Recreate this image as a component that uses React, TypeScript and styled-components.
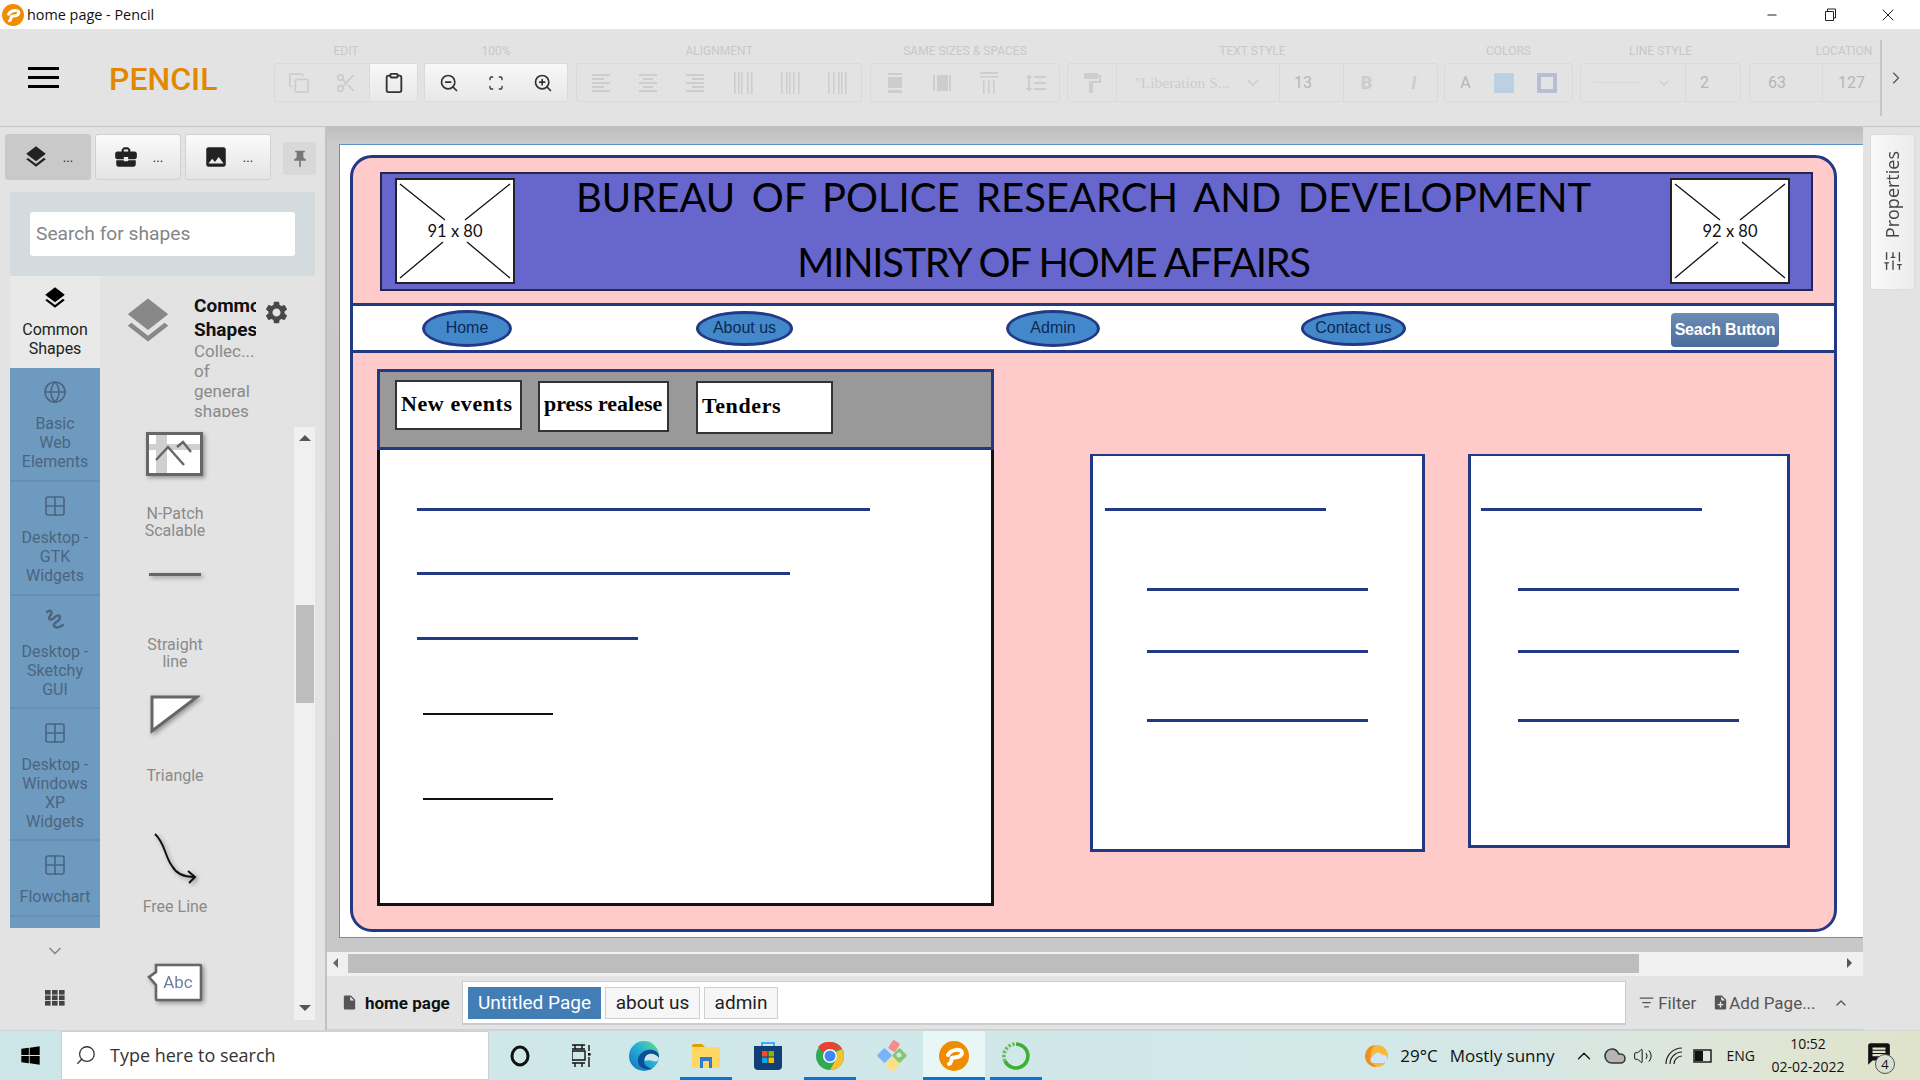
import React from 'react'
import styled, { createGlobalStyle } from 'styled-components'
import {
  Copy, Scissors, Clipboard, ZoomIn, ZoomOut, Scan, ChevronDown, ChevronUp, ChevronRight,
  Globe, Grid2x2, SlidersVertical, Search, Minus, X, Volume2, ListFilter, Cloud,
} from 'lucide-react'
import {
  MdLayers, MdBusinessCenter, MdPhoto, MdPushPin, MdSettings, MdFormatAlignLeft, MdFormatAlignCenter,
  MdFormatAlignRight, MdFormatPaint, MdFormatLineSpacing, MdInsertDriveFile, MdNoteAdd, MdMessage,
} from 'react-icons/md'
import { FaWindows } from 'react-icons/fa'

const GlobalStyle = createGlobalStyle`
  html, body { margin: 0; padding: 0; overflow: hidden; background: #e3e3e3; }
  * { box-sizing: border-box; }
  #root { width: 1920px; height: 1080px; font-family: Roboto, "Liberation Sans", sans-serif; }
`

const Screen = styled.div`
  width: 1920px;
  height: 1080px;
  display: flex;
  flex-direction: column;
  overflow: hidden;
`

/* window title */
const TitleBar = styled.div`
  height: 29px;
  flex: none;
  background: #fff;
  display: flex;
  align-items: center;
  padding-left: 2px;
  font-family: "Open Sans", sans-serif;
  font-size: 14.4px;
  color: #111;
`
const TitleText = styled.span`
  margin-left: 3px;
`
const WindowButtons = styled.div`
  margin-left: auto;
  margin-right: 3px;
  display: flex;
  color: #222;
`
const WindowButton = styled.div`
  width: 58px;
  height: 29px;
  display: flex;
  align-items: center;
  justify-content: center;
`

/* toolbar */
const Toolbar = styled.div`
  height: 98px;
  flex: none;
  background: #e3e3e3;
  border-bottom: 1px solid #c4c4c4;
  display: flex;
  position: relative;
`
const Burger = styled.svg`
  margin: 38px 0 0 28px;
  flex: none;
`
const Brand = styled.div`
  width: 165px;
  padding: 32px 0 0 50px;
  flex: none;
  font-size: 32px;
  font-weight: 500;
  line-height: 37px;
  color: #e08900;
`
const ToolGroups = styled.div`
  width: 1654px;
  flex: none;
  overflow: hidden;
  display: flex;
`
const ToolGroup = styled.div<{ $w: number; $ml: number }>`
  width: ${p => p.$w}px;
  margin-left: ${p => p.$ml}px;
  flex: none;
`
const ToolLabel = styled.div`
  height: 34px;
  padding-top: 15px;
  text-align: center;
  font-size: 12px;
  line-height: 14px;
  color: #c8c8c8;
  white-space: nowrap;
`
const ToolRow = styled.div`
  height: 39px;
  display: flex;
  border: 1px solid #dadada;
  border-radius: 3px;
  overflow: hidden;
`
const ToolButton = styled.div<{ $w?: number; $on?: boolean; $sep?: boolean; $serif?: boolean }>`
  width: ${p => (p.$w ? `${p.$w}px` : 'auto')};
  flex: ${p => (p.$w ? 'none' : '1')};
  display: flex;
  align-items: center;
  justify-content: center;
  gap: 14px;
  color: ${p => (p.$on ? '#333' : '#cdcdcd')};
  background: ${p => (p.$on ? 'linear-gradient(#f8f8f8, #e8e8e8)' : 'transparent')};
  border-left: ${p => (p.$sep ? '1px solid #dadada' : 'none')};
  font-family: ${p => (p.$serif ? '"Liberation Serif", serif' : 'Roboto, sans-serif')};
  font-size: ${p => (p.$serif ? '15.5px' : '16px')};
  white-space: nowrap;
`
const NumberText = styled.span<{ $pr?: number }>`
  padding-right: ${p => p.$pr || 0}px;
  color: #b6b6b6;
`
const StyleLetters = styled.span`
  display: flex;
  gap: 39px;
  margin-right: 4px;
  font-size: 18px;
  font-weight: 700;
`
const ColorSet = styled.div`
  display: flex;
  align-items: center;
  gap: 23px;
`
const FillSwatch = styled.span`
  width: 20px;
  height: 20px;
  background: #bcd0e1;
`
const StrokeSwatch = styled.span`
  width: 20px;
  height: 20px;
  border: 4px solid #b9bdd3;
`
const LineSample = styled.span`
  width: 48px;
  height: 1px;
  background: #d8d8d8;
`
const ToolMore = styled.div`
  position: absolute;
  right: 0;
  top: 11px;
  width: 40px;
  height: 76px;
  border-left: 2px solid #c6c6c6;
  display: flex;
  align-items: center;
  justify-content: center;
  padding-right: 10px;
  color: #555;
`

/* middle */
const Main = styled.div`
  flex: 1;
  display: flex;
  min-height: 0;
`

/* left panel */
const LeftPanel = styled.div`
  width: 327px;
  flex: none;
  background: #e3e3e3;
  border-right: 2px solid #c2c2c2;
  display: flex;
  flex-direction: column;
`
const PanelTabs = styled.div`
  display: flex;
  height: 65px;
  padding: 7px 0 0 5px;
  flex: none;
`
const PanelTab = styled.div<{ $on?: boolean }>`
  width: 86px;
  height: 46px;
  margin-right: 4px;
  border: 1px solid ${p => (p.$on ? '#c8c8c8' : '#d0d0d0')};
  border-radius: 3px;
  background: ${p => (p.$on ? '#c9c9c9' : 'linear-gradient(#fafafa, #e4e4e4)')};
  display: flex;
  align-items: center;
  justify-content: center;
  gap: 14px;
  color: #222;
  font-size: 13px;
`
const PinButton = styled.div`
  width: 33px;
  height: 33px;
  margin: 8px 0 0 8px;
  border-radius: 3px;
  background: #d8d8d8;
  display: flex;
  align-items: center;
  justify-content: center;
  color: #777;
`
const SearchArea = styled.div`
  width: 305px;
  height: 84px;
  margin-left: 10px;
  padding: 20px;
  flex: none;
  background: #d3dbdf;
`
const SearchInput = styled.input`
  width: 265px;
  height: 44px;
  border: 0;
  outline: 0;
  border-radius: 3px;
  background: #fff;
  padding: 0 6px 2px;
  font-family: Roboto, sans-serif;
  font-size: 19.2px;
  &::placeholder { color: #858585; opacity: 1; }
`
const PanelBody = styled.div`
  flex: 1;
  display: flex;
  padding-left: 10px;
  min-height: 0;
`
const Categories = styled.div`
  width: 90px;
  flex: none;
  display: flex;
  flex-direction: column;
`
const CategoryList = styled.div`
  height: 560px;
  flex: none;
  background: #6f9abf;
  overflow: hidden;
`
const Category = styled.div<{ $on?: boolean; $tight?: boolean }>`
  display: flex;
  flex-direction: column;
  align-items: center;
  padding: ${p => (p.$on ? '10px 0' : p.$tight ? '12px 0 8px' : '12px 0 9px')};
  background: ${p => (p.$on ? '#e9e9e9' : 'transparent')};
  color: ${p => (p.$on ? '#222' : '#4a6580')};
  border-bottom: ${p => (p.$on ? 'none' : '2px solid #658fb4')};
  font-size: 16px;
  line-height: 19px;
  text-align: center;
`
const CategoryIcon = styled.div`
  height: 24px;
  margin-bottom: 10px;
  display: flex;
  align-items: center;
  justify-content: center;
`
const MoreArrow = styled.div`
  height: 46px;
  padding-top: 13px;
  text-align: center;
  color: #888;
`
const AppsIcon = styled.svg`
  margin: 16px auto 0;
  display: block;
`
const ShapesColumn = styled.div`
  width: 215px;
  flex: none;
  display: flex;
  flex-direction: column;
  min-height: 0;
`
const CollectionHead = styled.div`
  height: 151px;
  flex: none;
  display: flex;
  padding-left: 21px;
  color: #888;
`
const CollectionIcon = styled.div`
  margin-top: 18px;
  width: 54px;
  flex: none;
`
const CollectionText = styled.div`
  width: 62px;
  height: 141px;
  margin-left: 19px;
  overflow: hidden;
  flex: none;
`
const CollectionTitle = styled.div`
  margin-top: 18px;
  font-size: 19px;
  font-weight: 700;
  line-height: 23.5px;
  color: #111;
  white-space: nowrap;
`
const CollectionNote = styled.div`
  font-size: 17px;
  line-height: 20px;
  color: #8a8a8a;
`
const GearBox = styled.div`
  margin: 23px 0 0 7px;
  color: #484848;
`
const ShapesRow = styled.div`
  display: flex;
  height: 593px;
  flex: none;
`
const ShapeList = styled.div`
  width: 194px;
  height: 593px;
  overflow: hidden;
  flex: none;
`
const ShapeCell = styled.div<{ $top?: number }>`
  width: 150px;
  height: 131px;
  margin-top: ${p => p.$top || 0}px;
  text-align: center;
  font-size: 16px;
  line-height: 17px;
  color: #8a8a8a;
`
const ShapeArt = styled.div<{ $pt: number }>`
  height: 82px;
  padding-top: ${p => p.$pt}px;
  display: flex;
  justify-content: center;
  align-items: flex-start;
  svg { filter: drop-shadow(2px 2px 2px rgba(0, 0, 0, .35)); }
`
const ShapeScroll = styled.div`
  width: 21px;
  height: 593px;
  flex: none;
  background: #f0f0f0;
  display: flex;
  flex-direction: column;
  align-items: center;
`
const ArrowUp = styled.i`
  margin-top: 8px;
  border: 6px solid transparent;
  border-top: 0;
  border-bottom-color: #555;
`
const ArrowDown = styled.i`
  margin-top: 302px;
  border: 6px solid transparent;
  border-bottom: 0;
  border-top-color: #555;
`
const ShapeThumb = styled.div`
  width: 18px;
  height: 98px;
  margin-top: 164px;
  background: #bdbdbd;
`

/* canvas */
const Center = styled.div`
  width: 1536px;
  flex: none;
  display: flex;
  flex-direction: column;
`
const CanvasArea = styled.div`
  height: 825px;
  flex: none;
  background: linear-gradient(#bdbdbd, #cbcbcb 16px, #c8c8c8);
  padding: 17px 0 14px 12px;
  display: flex;
`
const PageSheet = styled.div`
  flex: 1;
  background: #fff;
  border: 1px solid #5b93c9;
  border-right: 0;
  padding: 10px 26px 5px 10px;
  display: flex;
`
const Frame = styled.div`
  flex: 1;
  display: flex;
  flex-direction: column;
  background: #ffcaca;
  border: 3px solid #223a85;
  border-radius: 22px;
`
const Banner = styled.div`
  width: 1433px;
  height: 119px;
  margin: 14px 0 12px 27px;
  flex: none;
  background: #6666cc;
  border: 2px solid #26264a;
  display: flex;
  align-items: center;
  padding: 0 21px 0 13px;
`
const Placeholder = styled.div`
  width: 120px;
  height: 106px;
  margin-top: -1px;
  flex: none;
  background: #fff;
  border: 2px solid #222;
  position: relative;
  display: flex;
  align-items: center;
  justify-content: center;
  font-family: Lato, sans-serif;
  font-size: 16.5px;
  color: #111;
`
const PlaceholderLines = styled.svg`
  position: absolute;
  inset: 0;
`
const BannerText = styled.div`
  flex: 1;
  margin-bottom: 4px;
  font-family: Lato, sans-serif;
  font-size: 40px;
  line-height: 65px;
  color: #000;
`
const BannerLine = styled.div<{ $pr: number; $ws: number; $ls: number }>`
  padding-right: ${p => p.$pr}px;
  text-align: center;
  letter-spacing: ${p => p.$ls}px;
  word-spacing: ${p => p.$ws}px;
  white-space: pre;
`
const NavBar = styled.div`
  height: 50px;
  flex: none;
  background: #fff;
  border-top: 3px solid #223a85;
  border-bottom: 3px solid #223a85;
  display: flex;
  align-items: center;
  padding-left: 69px;
`
const NavOval = styled.div<{ $w: number; $h: number; $ml: number }>`
  width: ${p => p.$w}px;
  height: ${p => p.$h}px;
  margin-left: ${p => p.$ml}px;
  flex: none;
  border-radius: 50%;
  background: #4488cc;
  border: 3px solid #223a85;
  display: flex;
  align-items: center;
  justify-content: center;
  font-family: "Liberation Sans", sans-serif;
  font-size: 16px;
  color: #0c2a52;
`
const SearchBtn = styled.div`
  width: 108px;
  height: 34px;
  margin: 4px 0 0 265px;
  flex: none;
  border-radius: 4px;
  background: linear-gradient(#6d8db5, #4b6b9b);
  display: flex;
  align-items: center;
  justify-content: center;
  font-family: "Liberation Sans", sans-serif;
  font-size: 16px;
  font-weight: 700;
  letter-spacing: -.2px;
  color: #fff;
  white-space: nowrap;
`
const FrameBody = styled.div`
  flex: 1;
  display: flex;
  align-items: flex-start;
  padding: 16px 0 0 24px;
`
const NewsPanel = styled.div`
  width: 617px;
  height: 537px;
  flex: none;
  display: flex;
  flex-direction: column;
`
const NewsTabs = styled.div`
  height: 81px;
  flex: none;
  background: #999;
  border: 3px solid #223a85;
  display: flex;
  align-items: flex-start;
  padding: 8px 0 0 15px;
`
const NewsTab = styled.div<{ $w: number; $h: number; $ml: number; $mt: number; $pt: number; $ls: number }>`
  width: ${p => p.$w}px;
  height: ${p => p.$h}px;
  margin: ${p => p.$mt}px 0 0 ${p => p.$ml}px;
  flex: none;
  background: #fff;
  border: 2px solid #333;
  padding: ${p => p.$pt}px 0 0 4px;
  font-family: "Liberation Serif", serif;
  font-size: 22px;
  font-weight: 700;
  line-height: 30px;
  letter-spacing: ${p => p.$ls}px;
  color: #000;
  white-space: nowrap;
`
const NewsBody = styled.div`
  flex: 1;
  background: #fff;
  border: 3px solid #111;
  border-top: 0;
`
const Rule = styled.div<{ $w: number; $mt: number; $ml: number; $dark?: boolean }>`
  width: ${p => p.$w}px;
  height: ${p => (p.$dark ? 2 : 3)}px;
  margin: ${p => p.$mt}px 0 0 ${p => p.$ml}px;
  background: ${p => (p.$dark ? '#111' : '#223a85')};
`
const SideCard = styled.div<{ $w: number; $h: number; $ml: number }>`
  width: ${p => p.$w}px;
  height: ${p => p.$h}px;
  margin: 85px 0 0 ${p => p.$ml}px;
  flex: none;
  background: #fff;
  border: 3px solid #223a85;
  border-top-width: 2px;
`

/* scrollbar and page tabs */
const HScroll = styled.div`
  height: 24px;
  flex: none;
  background: #f0f0f0;
  display: flex;
  align-items: center;
  padding: 1px 0 3px;
`
const HArrowLeft = styled.i`
  margin-left: 6px;
  border: 5px solid transparent;
  border-left: 0;
  border-right-color: #666;
`
const HArrowRight = styled.i`
  margin-left: 208px;
  border: 5px solid transparent;
  border-right: 0;
  border-left-color: #555;
`
const HThumb = styled.div`
  width: 1291px;
  height: 19px;
  margin-left: 10px;
  background: #bdbdbd;
`
const PageBar = styled.div`
  flex: 1;
  background: #e3e3e3;
  border-bottom: 1px solid #cfcfcf;
  display: flex;
  align-items: center;
  padding-left: 14px;
  color: #555;
  font-size: 17px;
`
const PageName = styled.span`
  width: 86px;
  margin: 0 11px 0 7px;
  font-weight: 700;
  color: #111;
  white-space: nowrap;
`
const PageTabs = styled.div`
  width: 1164px;
  height: 44px;
  flex: none;
  background: #fff;
  border: 1px solid #ccc;
  border-bottom-width: 2px;
  padding: 5px;
  display: flex;
  gap: 4px;
`
const PageTab = styled.div<{ $on?: boolean; $w: number }>`
  width: ${p => p.$w}px;
  height: 32px;
  flex: none;
  display: flex;
  align-items: center;
  justify-content: center;
  background: ${p => (p.$on ? '#437db5' : '#f6f6f6')};
  border: ${p => (p.$on ? 'none' : '1px solid #cfcfcf')};
  color: ${p => (p.$on ? '#fff' : '#222')};
  font-size: 19px;
`
const PageAction = styled.div<{ $ml: number }>`
  margin-left: ${p => p.$ml}px;
  display: flex;
  align-items: center;
  white-space: nowrap;
`

/* right panel */
const RightPanel = styled.div`
  flex: 1;
  background: #e3e3e3;
  padding: 7px 0 0 7px;
`
const PropertiesTab = styled.div`
  width: 45px;
  height: 156px;
  border: 1px solid #dcdcdc;
  border-radius: 3px;
  background: linear-gradient(90deg, #f9f9f9, #ececec);
  display: flex;
  flex-direction: column;
  align-items: center;
  padding-top: 16px;
  color: #444;
`
const VerticalText = styled.div`
  writing-mode: vertical-rl;
  transform: rotate(180deg);
  font-family: "Open Sans", sans-serif;
  font-size: 18px;
  line-height: 22px;
  margin: 0 2px 12px 0;
`

/* taskbar */
const Taskbar = styled.div`
  height: 50px;
  flex: none;
  background: linear-gradient(90deg, #cce6e8, #d1e8e9 65%, #d4e7e6 78%, #dfe6d8 90%, #dfe3c9);
  border-top: 1px solid #cfd8d8;
  display: flex;
  align-items: stretch;
  font-family: "Open Sans", sans-serif;
  color: #111;
`
const StartButton = styled.div`
  width: 61px;
  flex: none;
  display: flex;
  align-items: center;
  justify-content: center;
`
const TaskSearch = styled.div`
  width: 428px;
  flex: none;
  background: #fff;
  border: 1px solid #d0d0d0;
  display: flex;
  align-items: center;
  padding: 0 0 2px 13px;
  gap: 13px;
  font-size: 18px;
  color: #333;
`
const SearchGlass = styled(Search)`
  transform: scaleX(-1);
`
const TaskItem = styled.div<{ $running?: boolean; $on?: boolean; $full?: boolean }>`
  width: 62px;
  flex: none;
  position: relative;
  display: flex;
  align-items: center;
  justify-content: center;
  background: ${p => (p.$on ? '#e8f6f6' : 'transparent')};
  &::after {
    content: '';
    display: ${p => (p.$running ? 'block' : 'none')};
    position: absolute;
    bottom: 0;
    left: ${p => (p.$full ? 0 : 5)}px;
    right: ${p => (p.$full ? 0 : 5)}px;
    height: 3px;
    background: #0078d7;
  }
`
const Tray = styled.div`
  margin-left: auto;
  margin-right: 16px;
  display: flex;
  align-items: center;
  flex: none;
`
const TrayItem = styled.div<{ $ml: number; $size?: number }>`
  margin-left: ${p => p.$ml}px;
  font-size: ${p => p.$size || 17}px;
  display: flex;
  align-items: center;
  white-space: nowrap;
`
const Clock = styled.div`
  width: 92px;
  margin: -2px 0 0 7px;
  text-align: center;
  font-size: 14px;
  line-height: 23px;
`
const NoteBadge = styled.div`
  position: relative;
  width: 50px;
  height: 30px;
  display: flex;
  justify-content: center;
`
const NoteCount = styled.span`
  position: absolute;
  right: 9px;
  bottom: -3px;
  width: 20px;
  height: 20px;
  border-radius: 50%;
  background: #d8dfd0;
  border: 1px solid #555;
  font-size: 13px;
  line-height: 18px;
  text-align: center;
`

const Bars = ({ xs }: { xs: number[] }) => (
  <svg width="22" height="26" viewBox="0 0 22 26" fill="currentColor">
    {xs.map(x => <rect key={x} x={x} y="2" width="1.6" height="22" />)}
  </svg>
)

const SizeIcon = ({ wide }: { wide?: boolean }) => (
  <svg width="20" height="24" viewBox="0 0 20 24" fill="currentColor">
    {wide
      ? <><rect x="1" y="4" width="2" height="16" /><rect x="5" y="4" width="11" height="16" /><rect x="17" y="4" width="2" height="16" /></>
      : <><rect x="3" y="2" width="14" height="2" /><rect x="3" y="6" width="14" height="11" /><rect x="3" y="19" width="14" height="3" /></>}
  </svg>
)

const SpacingIcon = () => (
  <svg width="24" height="26" viewBox="0 0 24 26" fill="currentColor">
    <rect x="3" y="2" width="18" height="2" />
    <rect x="3" y="6" width="18" height="1.5" />
    <rect x="6" y="10" width="1.6" height="14" />
    <rect x="11" y="10" width="1.6" height="14" />
    <rect x="16" y="10" width="1.6" height="14" />
  </svg>
)

const PlaceholderBox = ({ label }: { label: string }) => (
  <Placeholder>
    <PlaceholderLines viewBox="0 0 116 102" width="116" height="102" fill="none" stroke="#111" strokeWidth="1.3">
      <path d="M3 4 L48 40 M113 4 L68 40 M3 98 L46 62 M113 98 L70 62" />
    </PlaceholderLines>
    {label}
  </Placeholder>
)

const SketchyIcon = () => (
  <svg width="24" height="24" viewBox="0 0 24 24" fill="none" stroke="#4a6580" strokeWidth="2.4" strokeLinecap="round">
    <path d="M4 4 C8 1 10 4 7 8 C4 12 9 13 12 9 C15 6 19 8 16 12 C13 15 10 15 11 18 C13 21 17 19 20 17" />
  </svg>
)

const NPatchArt = () => (
  <svg width="58" height="45" viewBox="0 0 58 45">
    <rect x="1.5" y="1.5" width="54" height="41" fill="#fff" stroke="#666" strokeWidth="3" />
    <rect x="10" y="3" width="11" height="38" fill="#d0d0d0" />
    <rect x="3" y="12" width="51" height="6" fill="#d0d0d0" />
    <path d="M10 28 L22 15 L38 33 M31 15 L37 10 L45 20" fill="none" stroke="#666" strokeWidth="2.4" />
  </svg>
)

const LineArt = () => (
  <svg width="54" height="6" viewBox="0 0 54 6"><rect x="1" y="1" width="52" height="3" fill="#666" /></svg>
)

const TriangleArt = () => (
  <svg width="50" height="40" viewBox="0 0 50 40">
    <path d="M2 2 H47 L2 36 Z" fill="#fff" stroke="#666" strokeWidth="3" />
  </svg>
)

const FreeLineArt = () => (
  <svg width="44" height="52" viewBox="0 0 44 52" fill="none" stroke="#111" strokeWidth="2">
    <path d="M2 1 C12 10 12 24 19 33 C24 42 32 44 41 44 M35 38 L42 44 L36 50" />
  </svg>
)

const AbcArt = () => (
  <svg width="56" height="40" viewBox="0 0 56 40">
    <path d="M9 2 H53 A1 1 0 0 1 54 3 V36 A1 1 0 0 1 53 37 H10 A1 1 0 0 1 9 36 V22 L2 14 L9 9 Z" fill="#fff" stroke="#666" strokeWidth="2.6" />
    <text x="31" y="25" textAnchor="middle" fontFamily="Roboto, sans-serif" fontSize="17" fill="#6e7f9c">Abc</text>
  </svg>
)

const PencilLogo = ({ size }: { size: number }) => (
  <svg width={size} height={size} viewBox="0 0 30 30">
    <circle cx="15" cy="15" r="15" fill="#f08c00" />
    <path d="M9 14 C12 8 23 7 23 12 C23 17 15 16 13 17 C12 20 12 23 10 23" fill="none" stroke="#fff" strokeWidth="4" strokeLinecap="round" />
  </svg>
)

const EdgeLogo = () => (
  <svg width="32" height="32" viewBox="0 0 32 32">
    <defs>
      <linearGradient id="edgeA" x1="0" y1="1" x2="1" y2="0">
        <stop offset="0" stopColor="#0b6fc2" />
        <stop offset=".55" stopColor="#2ab0d6" />
        <stop offset="1" stopColor="#66e27f" />
      </linearGradient>
    </defs>
    <circle cx="16" cy="16" r="15" fill="url(#edgeA)" />
    <path d="M31 17 C31 11 25 9 20 10 C13 11 9 17 10 22 C11 28 18 31 24 29 C21 28 16 26 16 21 C16 17 21 15 24 17 C27 19 31 20 31 17 Z" fill="#0c4f97" />
    <path d="M31 18 C29 15 25 13 21 14 C18 15 16 18 17 21 C19 20 22 20 25 21 C28 22 31 21 31 18 Z" fill="#cde6e8" />
  </svg>
)

const FolderLogo = () => (
  <svg width="28" height="26" viewBox="0 0 28 26">
    <path d="M0 3 A2 2 0 0 1 2 1 H10 L13 4 H0 Z" fill="#e0a100" />
    <rect y="4" width="28" height="21" rx="2" fill="#ffd762" />
    <path d="M8 25 V14 H20 V25 H17 V18 H11 V25 Z" fill="#2b7cd3" />
  </svg>
)

const StoreLogo = () => (
  <svg width="30" height="30" viewBox="0 0 30 30">
    <path d="M9 6 V2 H21 V6" fill="none" stroke="#35b0f0" strokeWidth="2" />
    <path d="M1 5 H29 V25 A4 4 0 0 1 25 29 H5 A4 4 0 0 1 1 25 Z" fill="#123f75" />
    <rect x="9" y="10" width="5.5" height="5.5" fill="#f25022" />
    <rect x="15.5" y="10" width="5.5" height="5.5" fill="#7fba00" />
    <rect x="9" y="16.5" width="5.5" height="5.5" fill="#00a4ef" />
    <rect x="15.5" y="16.5" width="5.5" height="5.5" fill="#ffb900" />
  </svg>
)

const ChromeLogo = () => (
  <svg width="28" height="28" viewBox="0 0 28 28">
    <circle cx="14" cy="14" r="14" fill="#34a853" />
    <path d="M14 0 A14 14 0 0 1 26.1 7 H14 A7 7 0 0 0 7.9 10.5 L2 4.9 A14 14 0 0 1 14 0 Z" fill="#ea4335" />
    <path d="M26.1 7 A14 14 0 0 1 14 28 L20 17.5 A7 7 0 0 0 20 10 Z" fill="#fbc02d" />
    <circle cx="14" cy="14" r="7" fill="#fff" />
    <circle cx="14" cy="14" r="5.5" fill="#4285f4" />
  </svg>
)

const KrakenLogo = () => (
  <svg width="32" height="32" viewBox="0 0 32 32">
    <rect x="14" y="1" width="8" height="10" rx="1.5" fill="#f58a8f" transform="rotate(35 18 6)" />
    <rect x="3" y="10" width="11" height="11" rx="1.5" fill="#7db3f5" transform="rotate(45 8.5 15.5)" />
    <rect x="18" y="10" width="11" height="11" rx="1.5" fill="#8ac66a" transform="rotate(45 23.5 15.5)" />
    <rect x="11" y="19" width="11" height="11" rx="1.5" fill="#fbe083" transform="rotate(45 16.5 24.5)" />
    <circle cx="23" cy="15" r="2.5" fill="#cfe6e8" />
  </svg>
)

const RingLogo = () => (
  <svg width="28" height="28" viewBox="0 0 28 28" fill="none">
    <path d="M14 2 A12 12 0 1 1 3 19" stroke="#3eb135" strokeWidth="3.6" />
    <path d="M3 19 A12 12 0 0 1 14 2" stroke="#68bd5f" strokeWidth="3.6" strokeDasharray="2.4 1.6" />
  </svg>
)

const TaskViewIcon = () => (
  <svg width="20" height="24" viewBox="0 0 20 24" fill="none" stroke="#111" strokeWidth="1.4">
    <path d="M0 1 H13 M3 1 V5 M10 1 V5 M0 5 H13 M0 7 V16 H13 V7 Z M0 19 H13 M3 19 V23 M10 19 V23 M17 1 V7 M17 13 V23" />
    <rect x="16" y="9" width="2.6" height="2.6" fill="#111" stroke="none" />
  </svg>
)

const SunIcon = () => (
  <svg width="24" height="30" viewBox="0 0 24 30">
    <circle cx="13" cy="15" r="11" fill="#f6b93b" />
    <path d="M11 4 A11 11 0 0 0 13 26 A14 14 0 0 1 11 4 Z" fill="#ee8f1e" />
    <path d="M8 22 A4 4 0 0 1 9 15 A5 5 0 0 1 18 14 A4 4 0 0 1 20 22 Z" fill="#cfe6fa" />
  </svg>
)

const WifiIcon = () => (
  <svg width="18" height="18" viewBox="0 0 18 18" fill="none" stroke="#222" strokeWidth="1.2">
    <path d="M1 17 A16 16 0 0 1 17 1 M5 17 A12 12 0 0 1 17 5 M9 17 A8 8 0 0 1 17 9" />
  </svg>
)

const BatteryIcon = () => (
  <svg width="20" height="14" viewBox="0 0 20 14">
    <rect x="1" y="1" width="17" height="12" fill="none" stroke="#111" strokeWidth="1.4" />
    <rect x="2" y="2" width="8" height="10" fill="#111" />
  </svg>
)

const newsRules = [
  { w: 453, mt: 58, ml: 37 },
  { w: 373, mt: 61, ml: 37 },
  { w: 221, mt: 62, ml: 37 },
  { w: 130, mt: 73, ml: 43, dark: true },
  { w: 130, mt: 83, ml: 43, dark: true },
]

const cardOffsets = [77, 59, 66]

const App = () => {
  return (
    <Screen>
      <GlobalStyle />
      <TitleBar>
        <PencilLogo size={22} />
        <TitleText>home page - Pencil</TitleText>
        <WindowButtons>
          <WindowButton><Minus size={14} /></WindowButton>
          <WindowButton>
            <svg width="13" height="14" viewBox="0 0 13 14" fill="none" stroke="#222">
              <path d="M3.5 3 V1 H11.5 V10 H9.5 M1.5 3.5 H9.5 V12.5 H1.5 Z" />
            </svg>
          </WindowButton>
          <WindowButton><X size={20} strokeWidth={1.2} /></WindowButton>
        </WindowButtons>
      </TitleBar>

      <Toolbar>
        <Burger width="31" height="21" viewBox="0 0 31 21" fill="#000">
          <rect width="31" height="3" /><rect y="9" width="31" height="3" /><rect y="18" width="31" height="3" />
        </Burger>
        <Brand>PENCIL</Brand>
        <ToolGroups>
          <ToolGroup $w={144} $ml={50}>
            <ToolLabel>EDIT</ToolLabel>
            <ToolRow>
              <ToolButton><Copy size={22} /></ToolButton>
              <ToolButton><Scissors size={22} /></ToolButton>
              <ToolButton $on $sep><Clipboard size={22} /></ToolButton>
            </ToolRow>
          </ToolGroup>
          <ToolGroup $w={144} $ml={6}>
            <ToolLabel>100%</ToolLabel>
            <ToolRow>
              <ToolButton $on><ZoomOut size={20} /></ToolButton>
              <ToolButton $on><Scan size={16} /></ToolButton>
              <ToolButton $on><ZoomIn size={20} /></ToolButton>
            </ToolRow>
          </ToolGroup>
          <ToolGroup $w={286} $ml={8}>
            <ToolLabel>ALIGNMENT</ToolLabel>
            <ToolRow>
              <ToolButton><MdFormatAlignLeft size={24} /></ToolButton>
              <ToolButton><MdFormatAlignCenter size={24} /></ToolButton>
              <ToolButton><MdFormatAlignRight size={24} /></ToolButton>
              <ToolButton><Bars xs={[2, 6, 9, 15, 19]} /></ToolButton>
              <ToolButton><Bars xs={[2, 7, 10, 14, 19]} /></ToolButton>
              <ToolButton><Bars xs={[2, 7, 12, 15, 19]} /></ToolButton>
            </ToolRow>
          </ToolGroup>
          <ToolGroup $w={190} $ml={8}>
            <ToolLabel>SAME SIZES &amp; SPACES</ToolLabel>
            <ToolRow>
              <ToolButton><SizeIcon /></ToolButton>
              <ToolButton><SizeIcon wide /></ToolButton>
              <ToolButton><SpacingIcon /></ToolButton>
              <ToolButton><MdFormatLineSpacing size={24} /></ToolButton>
            </ToolRow>
          </ToolGroup>
          <ToolGroup $w={371} $ml={7}>
            <ToolLabel>TEXT STYLE</ToolLabel>
            <ToolRow>
              <ToolButton $w={48}><MdFormatPaint size={24} /></ToolButton>
              <ToolButton $w={163} $sep $serif>"Liberation S... <ChevronDown size={18} /></ToolButton>
              <ToolButton $w={64} $sep><NumberText $pr={17}>13</NumberText></ToolButton>
              <ToolButton $sep $w={94}>
                <StyleLetters><b>B</b><i>I</i></StyleLetters>
              </ToolButton>
            </ToolRow>
          </ToolGroup>
          <ToolGroup $w={129} $ml={6}>
            <ToolLabel>COLORS</ToolLabel>
            <ToolRow>
              <ToolButton>
                <ColorSet><NumberText>A</NumberText><FillSwatch /><StrokeSwatch /></ColorSet>
              </ToolButton>
            </ToolRow>
          </ToolGroup>
          <ToolGroup $w={161} $ml={7}>
            <ToolLabel>LINE STYLE</ToolLabel>
            <ToolRow>
              <ToolButton $w={104}><LineSample /><ChevronDown size={16} /></ToolButton>
              <ToolButton $sep><NumberText $pr={17}>2</NumberText></ToolButton>
            </ToolRow>
          </ToolGroup>
          <ToolGroup $w={190} $ml={8}>
            <ToolLabel>LOCATION</ToolLabel>
            <ToolRow>
              <ToolButton $w={72}><NumberText $pr={18}>63</NumberText></ToolButton>
              <ToolButton $w={58} $sep><NumberText>127</NumberText></ToolButton>
            </ToolRow>
          </ToolGroup>
        </ToolGroups>
        <ToolMore><ChevronRight size={20} strokeWidth={1.4} /></ToolMore>
      </Toolbar>

      <Main>
        <LeftPanel>
          <PanelTabs>
            <PanelTab $on><MdLayers size={26} />...</PanelTab>
            <PanelTab><MdBusinessCenter size={26} />...</PanelTab>
            <PanelTab><MdPhoto size={26} />...</PanelTab>
            <PinButton><MdPushPin size={20} /></PinButton>
          </PanelTabs>
          <SearchArea><SearchInput placeholder="Search for shapes" /></SearchArea>
          <PanelBody>
            <Categories>
              <Category $on>
                <CategoryIcon><MdLayers size={26} color="#000" /></CategoryIcon>
                Common<br />Shapes
              </Category>
              <CategoryList>
                <Category>
                  <CategoryIcon><Globe size={24} strokeWidth={1.6} /></CategoryIcon>
                  Basic<br />Web<br />Elements
                </Category>
                <Category>
                  <CategoryIcon><Grid2x2 size={24} strokeWidth={1.6} /></CategoryIcon>
                  Desktop -<br />GTK<br />Widgets
                </Category>
                <Category $tight>
                  <CategoryIcon><SketchyIcon /></CategoryIcon>
                  Desktop -<br />Sketchy<br />GUI
                </Category>
                <Category $tight>
                  <CategoryIcon><Grid2x2 size={24} strokeWidth={1.6} /></CategoryIcon>
                  Desktop -<br />Windows<br />XP<br />Widgets
                </Category>
                <Category>
                  <CategoryIcon><Grid2x2 size={24} strokeWidth={1.6} /></CategoryIcon>
                  Flowchart
                </Category>
              </CategoryList>
              <MoreArrow><ChevronDown size={20} /></MoreArrow>
              <AppsIcon width="20" height="16" viewBox="0 0 20 16" fill="#444">
                {[0, 7, 14].map(x => [0, 5.5, 11].map(y => <rect key={`${x}-${y}`} x={x} y={y} width="5.6" height="4.6" />))}
              </AppsIcon>
            </Categories>
            <ShapesColumn>
              <CollectionHead>
                <CollectionIcon><MdLayers size={54} /></CollectionIcon>
                <CollectionText>
                  <CollectionTitle>Common<br />Shapes</CollectionTitle>
                  <CollectionNote>Collec...<br />of<br />general<br />shapes</CollectionNote>
                </CollectionText>
                <GearBox><MdSettings size={27} /></GearBox>
              </CollectionHead>
              <ShapesRow>
                <ShapeList>
                  <ShapeCell $top={-4}><ShapeArt $pt={9}><NPatchArt /></ShapeArt>N-Patch<br />Scalable</ShapeCell>
                  <ShapeCell><ShapeArt $pt={18}><LineArt /></ShapeArt>Straight<br />line</ShapeCell>
                  <ShapeCell><ShapeArt $pt={10}><TriangleArt /></ShapeArt>Triangle</ShapeCell>
                  <ShapeCell><ShapeArt $pt={17}><FreeLineArt /></ShapeArt>Free Line</ShapeCell>
                  <ShapeCell><ShapeArt $pt={16}><AbcArt /></ShapeArt></ShapeCell>
                </ShapeList>
                <ShapeScroll>
                  <ArrowUp />
                  <ShapeThumb />
                  <ArrowDown />
                </ShapeScroll>
              </ShapesRow>
            </ShapesColumn>
          </PanelBody>
        </LeftPanel>

        <Center>
          <CanvasArea>
            <PageSheet>
              <Frame>
                <Banner>
                  <PlaceholderBox label="91 x 80" />
                  <BannerText>
                    <BannerLine $pr={18} $ws={-2} $ls={0}>{'BUREAU  OF  POLICE  RESEARCH  AND  DEVELOPMENT'}</BannerLine>
                    <BannerLine $pr={78} $ws={0} $ls={-1.3}>MINISTRY OF HOME AFFAIRS</BannerLine>
                  </BannerText>
                  <PlaceholderBox label="92 x 80" />
                </Banner>
                <NavBar>
                  <NavOval $w={90} $h={37} $ml={0}>Home</NavOval>
                  <NavOval $w={97} $h={35} $ml={184}>About us</NavOval>
                  <NavOval $w={94} $h={37} $ml={213}>Admin</NavOval>
                  <NavOval $w={105} $h={35} $ml={201}>Contact us</NavOval>
                  <SearchBtn>Seach Button</SearchBtn>
                </NavBar>
                <FrameBody>
                  <NewsPanel>
                    <NewsTabs>
                      <NewsTab $w={127} $h={50} $ml={0} $mt={0} $pt={7} $ls={.6}>New events</NewsTab>
                      <NewsTab $w={131} $h={51} $ml={16} $mt={1} $pt={6} $ls={0}>press realese</NewsTab>
                      <NewsTab $w={137} $h={53} $ml={27} $mt={1} $pt={8} $ls={.6}>Tenders</NewsTab>
                    </NewsTabs>
                    <NewsBody>
                      {newsRules.map(r => <Rule key={r.mt} $w={r.w} $mt={r.mt} $ml={r.ml} $dark={r.dark} />)}
                    </NewsBody>
                  </NewsPanel>
                  <SideCard $w={335} $h={398} $ml={96}>
                    <Rule $w={221} $mt={52} $ml={12} />
                    {cardOffsets.map(mt => <Rule key={mt} $w={221} $mt={mt} $ml={54} />)}
                  </SideCard>
                  <SideCard $w={322} $h={394} $ml={43}>
                    <Rule $w={221} $mt={52} $ml={10} />
                    {cardOffsets.map(mt => <Rule key={mt} $w={221} $mt={mt} $ml={47} />)}
                  </SideCard>
                </FrameBody>
              </Frame>
            </PageSheet>
          </CanvasArea>
          <HScroll>
            <HArrowLeft />
            <HThumb />
            <HArrowRight />
          </HScroll>
          <PageBar>
            <MdInsertDriveFile size={17} />
            <PageName>home page</PageName>
            <PageTabs>
              <PageTab $on $w={133}>Untitled Page</PageTab>
              <PageTab $w={95}>about us</PageTab>
              <PageTab $w={74}>admin</PageTab>
            </PageTabs>
            <PageAction $ml={13}><ListFilter size={15} />&nbsp;Filter</PageAction>
            <PageAction $ml={16}><MdNoteAdd size={17} />Add Page...</PageAction>
            <PageAction $ml={17}><ChevronUp size={16} /></PageAction>
          </PageBar>
        </Center>

        <RightPanel>
          <PropertiesTab>
            <VerticalText>Properties</VerticalText>
            <SlidersVertical size={22} strokeWidth={1.5} />
          </PropertiesTab>
        </RightPanel>
      </Main>

      <Taskbar>
        <StartButton><FaWindows size={21} color="#000" /></StartButton>
        <TaskSearch><SearchGlass size={22} strokeWidth={1.4} />Type here to search</TaskSearch>
        <TaskItem>
          <svg width="20" height="22" viewBox="0 0 20 22" fill="none" stroke="#111" strokeWidth="3"><ellipse cx="10" cy="11" rx="8" ry="9" /></svg>
        </TaskItem>
        <TaskItem><TaskViewIcon /></TaskItem>
        <TaskItem><EdgeLogo /></TaskItem>
        <TaskItem $running><FolderLogo /></TaskItem>
        <TaskItem><StoreLogo /></TaskItem>
        <TaskItem $running><ChromeLogo /></TaskItem>
        <TaskItem><KrakenLogo /></TaskItem>
        <TaskItem $running $on $full><PencilLogo size={30} /></TaskItem>
        <TaskItem $running><RingLogo /></TaskItem>
        <Tray>
          <TrayItem $ml={0}><SunIcon /></TrayItem>
          <TrayItem $ml={12}>29°C</TrayItem>
          <TrayItem $ml={12}>Mostly sunny</TrayItem>
          <TrayItem $ml={18}><ChevronUp size={22} strokeWidth={1.4} /></TrayItem>
          <TrayItem $ml={8}><Cloud size={24} strokeWidth={1.5} fill="#b5b5b5" color="#333" /></TrayItem>
          <TrayItem $ml={6}><Volume2 size={20} strokeWidth={1.2} /></TrayItem>
          <TrayItem $ml={12}><WifiIcon /></TrayItem>
          <TrayItem $ml={10}><BatteryIcon /></TrayItem>
          <TrayItem $ml={14} $size={14}>ENG</TrayItem>
          <Clock>10:52<br />02-02-2022</Clock>
          <NoteBadge>
            <MdMessage size={26} color="#111" />
            <NoteCount>4</NoteCount>
          </NoteBadge>
        </Tray>
      </Taskbar>
    </Screen>
  )
}

export default App
